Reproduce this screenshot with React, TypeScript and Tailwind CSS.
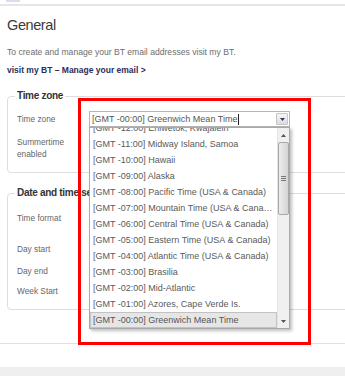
import React from "react";

const items = [
  "[GMT -12:00] Eniwetok, Kwajalein",
  "[GMT -11:00] Midway Island, Samoa",
  "[GMT -10:00] Hawaii",
  "[GMT -09:00] Alaska",
  "[GMT -08:00] Pacific Time (USA & Canada)",
  "[GMT -07:00] Mountain Time (USA & Canada)",
  "[GMT -06:00] Central Time (USA & Canada)",
  "[GMT -05:00] Eastern Time (USA & Canada)",
  "[GMT -04:00] Atlantic Time (USA & Canada)",
  "[GMT -03:00] Brasilia",
  "[GMT -02:00] Mid-Atlantic",
  "[GMT -01:00] Azores, Cape Verde Is.",
  "[GMT -00:00] Greenwich Mean Time",
];

function Tri({ up, color = "#555" }: { up?: boolean; color?: string }) {
  return (
    <svg width="5" height="3" viewBox="0 0 5 3">
      {up ? <polygon points="0,3 5,3 2.5,0" fill={color} /> : <polygon points="0,0 5,0 2.5,3" fill={color} />}
    </svg>
  );
}

export default function App() {
  return (
    <div className="relative w-[345px] h-[376px] overflow-hidden bg-white font-['Liberation_Sans',Arial,sans-serif]">
      <div className="h-[4px] flex">
        <div className="ml-[6px] w-[14px] h-[2px] bg-[#dcdcee]" />
      </div>
      <div className="h-[2px] bg-[#e6e6e6]" />
      <div className="pl-[7px]">
        <h1 className="mt-[10px] h-[18px] text-[14.5px] leading-[18px] text-[#3a3a3a] tracking-[-0.4px]">General</h1>
        <p className="mt-[12px] h-[12px] text-[8.6px] leading-[12px] text-[#6e6e6e] whitespace-nowrap">
          To create and manage your BT email addresses visit my BT.
        </p>
        <p className="mt-[6px] h-[12px] text-[8.5px] leading-[12px] font-bold text-[#2b2d5c] whitespace-nowrap">
          visit my BT – Manage your email &gt;
        </p>

        <fieldset className="mt-[14px] w-[420px] border border-[#dedede] rounded-[4px] p-0 m-0">
          <legend className="ml-[7px] px-[2px] text-[10px] leading-[12px] font-bold text-[#333] tracking-[-0.3px]">
            Time zone
          </legend>
          <div className="pl-[9px] pt-[9px] pb-[12px]">
            <div className="flex items-center h-[16px]">
              <div className="w-[72px] text-[8.3px] leading-[12px] text-[#666]">Time zone</div>
              <div className="relative z-10 w-[201px] h-[16px]">
                <div className="flex items-center h-[16px] border border-[#b5b5b5] bg-white">
                  <div className="flex-1 flex items-center pl-[2px] text-[9px] leading-[14px] text-[#555] whitespace-nowrap">
                    [GMT -00:00] Greenwich Mean Time
                    <span className="ml-[1px] inline-block w-[1px] h-[11px] bg-[#222]" />
                  </div>
                  <div className="mr-[1px] w-[12px] h-[12px] flex items-center justify-center border border-[#c6c6c6] rounded-[1px] bg-gradient-to-b from-[#f6f6f6] to-[#dcdcdc]">
                    <Tri color="#2a3868" />
                  </div>
                </div>
                <div className="absolute left-0 top-[16px] w-[201px] h-[202px] flex bg-white border border-[#a9a9a9] shadow-[2px_2px_3px_rgba(0,0,0,0.25)] overflow-hidden">
                  <div className="flex-1 min-w-0 overflow-hidden">
                    <div className="mt-[-8px]">
                      {items.map((t, i) =>
                        i === items.length - 1 ? (
                          <div
                            key={i}
                            className="h-[16px] px-[2px] text-[9px] leading-[14px] text-[#555] truncate bg-[#e6e6e6] border border-[#c2c2c2]"
                          >
                            {t}
                          </div>
                        ) : (
                          <div key={i} className="h-[16px] px-[3px] text-[9px] leading-[16px] text-[#5a5a5a] truncate">
                            {t}
                          </div>
                        )
                      )}
                    </div>
                  </div>
                  <div className="w-[12px] flex flex-col bg-[#f0f0f0] border-l border-[#e4e4e4]">
                    <div className="h-[14px] flex items-center justify-center">
                      <Tri up />
                    </div>
                    <div className="h-[73px] rounded-[2px] border border-[#a8a8a8] bg-gradient-to-r from-[#ececec] to-[#d4d4d4] flex items-center justify-center">
                      <div className="flex flex-col gap-[1px]">
                        <div className="w-[5px] h-[1px] bg-[#777]" />
                        <div className="w-[5px] h-[1px] bg-[#777]" />
                        <div className="w-[5px] h-[1px] bg-[#777]" />
                      </div>
                    </div>
                    <div className="flex-1" />
                    <div className="h-[14px] flex items-center justify-center">
                      <Tri />
                    </div>
                  </div>
                </div>
              </div>
            </div>
            <div className="mt-[9px] text-[8.3px] leading-[12px] text-[#666]">
              Summertime
              <br />
              enabled
            </div>
          </div>
        </fieldset>

        <fieldset className="mt-[14px] w-[420px] border border-[#dedede] rounded-[4px] p-0 m-0">
          <legend className="ml-[7px] px-[2px] text-[10px] leading-[12px] font-bold text-[#333] tracking-[-0.3px]">
            Date and time settings
          </legend>
          <div className="pl-[9px] pt-[13px] pb-[12px] text-[8.3px] leading-[12px] text-[#666]">
            <div>Time format</div>
            <div className="mt-[19px]">Day start</div>
            <div className="mt-[10px]">Day end</div>
            <div className="mt-[8px]">Week Start</div>
          </div>
        </fieldset>
      </div>
      <div className="mt-[33px] h-[1px] bg-[#e0e0e0]" />
      <div className="mt-[23px] h-[20px] bg-[#efefef]" />

      <div className="absolute left-[78px] top-[98px] w-[233px] h-[247px] border-[3px] border-[#ff0000] z-20" />
    </div>
  );
}
